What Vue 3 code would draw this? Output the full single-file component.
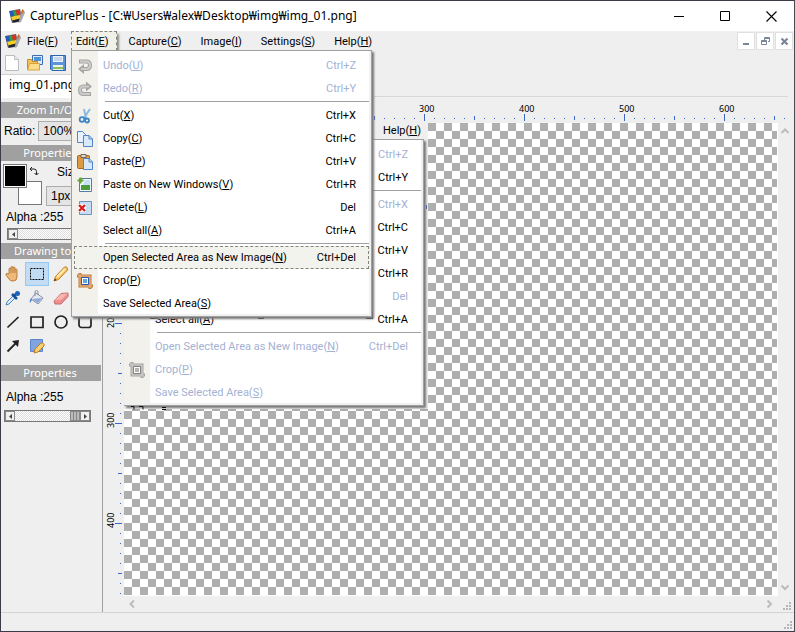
<script setup>
const menubar = [
  { text: 'File', key: 'F' },
  { text: 'Edit', key: 'E', open: true },
  { text: 'Capture', key: 'C' },
  { text: 'Image', key: 'I' },
  { text: 'Settings', key: 'S' },
  { text: 'Help', key: 'H' },
]

const entries = [
  { text: 'Undo', key: 'U', short: 'Ctrl+Z', icon: 'undo' },
  { text: 'Redo', key: 'R', short: 'Ctrl+Y', icon: 'redo' },
  null,
  { text: 'Cut', key: 'X', short: 'Ctrl+X', icon: 'cut' },
  { text: 'Copy', key: 'C', short: 'Ctrl+C', icon: 'copy' },
  { text: 'Paste', key: 'P', short: 'Ctrl+V', icon: 'paste' },
  { text: 'Paste on New Windows', key: 'V', short: 'Ctrl+R', icon: 'pasteNew' },
  { text: 'Delete', key: 'L', short: 'Del', icon: 'delete' },
  { text: 'Select all', key: 'A', short: 'Ctrl+A' },
  null,
  { text: 'Open Selected Area as New Image', key: 'N', short: 'Ctrl+Del' },
  { text: 'Crop', key: 'P', icon: 'crop' },
  { text: 'Save Selected Area', key: 'S' },
]

const menus = [
  {
    name: 'inner',
    disabled: ['Undo', 'Cut', 'Delete', 'Open Selected Area as New Image', 'Crop', 'Save Selected Area'],
    active: '',
  },
  { name: 'front', disabled: ['Undo', 'Redo'], active: 'N' },
]

const ticks = (n) =>
  Array.from({ length: n }, (_, i) => ({ at: i * 10, kind: i % 10 === 0 ? 2 : i % 5 === 0 ? 1 : 0 }))
const topTicks = ticks(67)
const leftTicks = ticks(48)

const tools = ['hand', 'select', 'pencil', 'blank', 'picker', 'fill', 'eraser', 'blank', 'line', 'rect', 'circle', 'round', 'arrow', 'edit']
</script>

<template>
  <div class="window">
    <header class="titlebar">
      <svg class="logo" width="16" height="16" viewBox="0 0 16 16">
        <g id="logo">
          <path d="M0 3l11-2 2 9-3 4-7 1z" fill="#55565c" />
          <path d="M.5 3.500L4 3l1.500 5L2 9z" fill="#2458c4" />
          <path d="M4 3l3-.6L8 8l-2.500.5z" fill="#2fa644" />
          <path d="M7 2.400l4-.6.500 5.200L8 8z" fill="#e0301f" />
          <path d="M2 9l3.500-1 6-1-.5 3.500-7.500 2z" fill="#f7cf2a" />
          <path d="M3.500 12.500l7.500-2-1.500 3-5 1z" fill="#23252b" />
          <path d="M12 4l3-1.500 1 2L12 14l-2.500 1z" fill="#a5a8ac" />
          <path d="M12 4l1.500-3 1.500 1.500-2 4z" fill="#c9733a" />
        </g>
      </svg>
      <h1>CapturePlus - [C:₩Users₩alex₩Desktop₩img₩img_01.png]</h1>
      <div class="winbtns">
        <button aria-label="Minimize"><svg width="11" height="11"><path d="M0 5.500h10" stroke="#000" /></svg></button>
        <button aria-label="Maximize"><svg width="11" height="11"><path d="M.5.5h9v9h-9z" fill="none" stroke="#000" /></svg></button>
        <button aria-label="Close"><svg width="11" height="11"><path d="M.5.5l10 10M10.500.5l-10 10" stroke="#000" stroke-width="1.100" /></svg></button>
      </div>
    </header>

    <nav class="menubar">
      <svg class="logo" width="16" height="16" viewBox="0 0 16 16"><use href="#logo" /></svg>
      <button v-for="m in menubar" :key="m.text" :class="['top', { open: m.open }]">{{ m.text }}(<u>{{ m.key }}</u>)</button>
      <div class="mdi">
        <button aria-label="Minimize document"><svg width="9" height="9"><path d="M1 7h6" stroke="#7a8696" stroke-width="2" /></svg></button>
        <button aria-label="Restore document"><svg width="9" height="9" fill="none" stroke="#7a8696"><path d="M3.500 3V.5h5v4H7M3 1.500h5M.5 3.500h5v4h-5zM1 4.500h4" /></svg></button>
        <button aria-label="Close document"><svg width="9" height="9"><path d="M1.500 1.500l6 6M7.500 1.500l-6 6" stroke="#7a8696" stroke-width="2.200" /></svg></button>
      </div>
    </nav>

    <div class="toolbar">
      <button aria-label="New"><svg width="16" height="16"><path d="M1.500.5h9l4 4v11h-13z" fill="#fff" stroke="#b9bcc0" /><path d="M10.500.5v4h4" fill="#eee" stroke="#b9bcc0" /></svg></button>
      <button aria-label="Open">
        <svg width="16" height="16"><path d="M5.500.5h10v9h-10z" fill="#dceaf8" stroke="#3d6fae" /><path d="M7 2h7v4H7z" fill="#4f92d6" /><path d="M.5 4.500h4l1 2h5v8H.5z" fill="#f5c358" stroke="#c98a26" /><path d="M2.500 8.500h10v6.500H.5z" fill="#fbdd8b" stroke="#d9a03c" /></svg>
      </button>
      <button aria-label="Save">
        <svg width="16" height="16"><path d="M.5.5h15v15H2l-1.500-1.500z" fill="#5c93dc" stroke="#2f64ad" /><path d="M3 1h10v6H3z" fill="#eef4fc" /><path d="M4 3h8M4 5h8" stroke="#9db8d8" /><path d="M3 10h10v5H3z" fill="#eef2e6" /><path d="M3 13h10" stroke="#8abf5a" stroke-width="2" /></svg>
      </button>
    </div>

    <div class="tabs"><a class="tab" href="#doc">img_01.png</a></div>

    <div class="body">
      <aside class="side">
        <h2>Zoom In/Out</h2>
        <div class="row ratio">
          <label for="ratio">Ratio:</label>
          <select id="ratio"><option>100%</option></select>
        </div>
        <h2>Properties</h2>
        <div class="colors">
          <div class="swatches">
            <span class="sw back"></span>
            <span class="sw fore"></span>
            <svg class="swap" width="10" height="10" fill="none" stroke="#222"><path d="M1 3h4q2.500 0 2.500 2.500V9M3 1L1 3l2 2M5.500 7l2 2 2-2" /></svg>
          </div>
          <div class="size">
            <label for="size">Size</label>
            <select id="size"><option>1px</option></select>
          </div>
        </div>
        <p class="alpha">Alpha :255</p>
        <div class="slider wide">
          <button aria-label="Less"><svg width="3" height="5"><path d="M3 0v5L0 2.500z" fill="#444" /></svg></button>
          <span class="track"></span>
          <button aria-label="More"><svg width="3" height="5"><path d="M0 0v5l3-2.500z" fill="#444" /></svg></button>
        </div>
        <h2>Drawing tools</h2>
        <div class="tools">
          <button v-for="(t, i) in tools" :key="i" :aria-label="t" :class="{ on: t === 'select' }">
            <svg width="16" height="16" viewBox="0 0 16 16" fill="none">
              <g v-if="t === 'hand'"><path d="M4 8V3q0-1 1-1t1 1V1.500q0-1 1-1t1 1V2q0-1 1-1t1 1v2q0-1 1-1t1 1v7q0 4-4 4H7q-2 0-3-2L1 9q-.5-1.500 1-1.500z" fill="#f0b878" stroke="#b87c40" /><path d="M6 3v4M8 2v5M10 4v3" stroke="#b87c40" /></g>
              <path v-else-if="t === 'select'" d="M1.500 2.500h13v11h-13z" stroke="#000" stroke-dasharray="2 1" />
              <g v-else-if="t === 'pencil'"><path d="M1 15l1.500-4.500L11.500 1q1.500-.5 2.500.5t.5 2.500L5.500 13.500z" fill="#f8c65c" stroke="#bb7a28" /><path d="M4 11l8-8" stroke="#fdebb0" stroke-width="2" /><path d="M1 15l1-2.500L3.500 14z" fill="#333" /></g>
              <g v-else-if="t === 'picker'"><path d="M1 15l1-3 6-6 2 2-6 6z" fill="#d8ecfb" stroke="#4a86bb" /><path d="M7 4l5 5M9 6l3.500-3.500" stroke="#174f96" stroke-width="2.500" /><circle cx="12.500" cy="3.500" r="2.500" fill="#1c68b8" /></g>
              <g v-else-if="t === 'fill'"><path d="M7 3l7 5-5 6-7-5z" fill="#e5e8ee" stroke="#8791a4" /><path d="M3 9l10-1-4 5z" fill="#8fa9dc" /><path d="M6 6V2q0-1.500 1.500-1.500T9 2v3" stroke="#8791a4" /><path d="M2 8q-2 3-1 5l2-3z" fill="#4f7fd0" /></g>
              <g v-else-if="t === 'eraser'"><path d="M1 11l7-7.500 7-.5v3.500l-7 7.500H2z" fill="#ec8f8f" stroke="#c86a6a" /><path d="M8 4l6.500-.5-6 6-7 1z" fill="#f7b5b2" /></g>
              <path v-else-if="t === 'line'" d="M2.500 13.500l11-10.500" stroke="#222" stroke-width="1.700" />
              <path v-else-if="t === 'rect'" d="M2 3h12v10.500H2z" stroke="#222" stroke-width="1.700" />
              <circle v-else-if="t === 'circle'" cx="8" cy="8" r="6" stroke="#222" stroke-width="1.700" />
              <rect v-else-if="t === 'round'" x="2" y="2.500" width="12" height="11" rx="2.500" stroke="#222" stroke-width="1.700" />
              <g v-else-if="t === 'arrow'"><path d="M2.500 13.500l8-8" stroke="#222" stroke-width="1.800" /><path d="M7 3l7-1-1 7z" fill="#222" /></g>
              <g v-else-if="t === 'edit'"><path d="M1.500 1.500h12v12h-12z" fill="#7fa4e0" stroke="#5b85cc" /><path d="M5 15l1-4 6-6q1.500-.5 2.500.5t.5 2.500l-6 6z" fill="#f8cf6c" stroke="#bb7a28" /></g>
            </svg>
          </button>
        </div>
        <h2>Properties</h2>
        <p class="alpha low">Alpha :255</p>
        <div class="slider">
          <button aria-label="Less"><svg width="3" height="5"><path d="M3 0v5L0 2.500z" fill="#444" /></svg></button>
          <span class="track"><i class="thumb"></i></span>
          <button aria-label="More"><svg width="3" height="5"><path d="M0 0v5l3-2.500z" fill="#444" /></svg></button>
        </div>
      </aside>

      <main class="work">
        <svg class="ruler across">
          <template v-for="t in topTicks" :key="t.at">
            <rect v-if="t.kind === 2" :x="t.at" y="17" width="1" height="7" />
            <rect v-else-if="t.kind === 1" :x="t.at" y="19" width="1" height="4" />
            <rect v-else :x="t.at" y="21" width="1" height="1" />
            <text v-if="t.kind === 2 && t.at" :x="t.at - 5" y="15">{{ t.at }}</text>
          </template>
        </svg>
        <svg class="ruler down">
          <template v-for="t in leftTicks" :key="t.at">
            <rect v-if="t.kind === 2" x="12" :y="t.at" width="7" height="1" />
            <rect v-else-if="t.kind === 1" x="15" :y="t.at" width="4" height="1" />
            <rect v-else x="17" :y="t.at" width="1" height="1" />
            <text v-if="t.kind === 2 && t.at" :transform="`translate(11 ${t.at + 5}) rotate(-90)`">{{ t.at }}</text>
          </template>
        </svg>
        <div class="canvas">
          <div class="pasted">
            <span class="help">Help(<u>H</u>)</span>
            <svg class="edge" width="4" height="30"><path d="M0 6.500h3" stroke="#d0d0d0" /><path d="M2.500 26v5" stroke="#3b63c9" /></svg>
          </div>
        </div>
        <div class="vbar">
          <button aria-label="Scroll up"><svg width="8" height="7"><path d="M.5 5L4 1.500 7.500 5" /></svg></button>
          <button aria-label="Scroll down"><svg width="8" height="7"><path d="M.5 1.500L4 5l3.500-3.500" /></svg></button>
        </div>
        <div class="hbar">
          <button aria-label="Scroll left"><svg width="7" height="8"><path d="M5 .5L1.500 4 5 7.500" /></svg></button>
          <button aria-label="Scroll right"><svg width="7" height="8"><path d="M1.500.5L5 4 1.500 7.500" /></svg></button>
        </div>
        <svg class="grip" width="8" height="8"><path d="M6 0h2v2H6zM3 3h2v2H3zM6 3h2v2H6zM0 6h2v2H0zM3 6h2v2H3zM6 6h2v2H6z" fill="#b5b5b5" /></svg>
      </main>
    </div>

    <footer class="status">
      <svg class="grip" width="8" height="8"><path d="M6 0h2v2H6zM3 3h2v2H3zM6 3h2v2H6zM0 6h2v2H0zM3 6h2v2H3zM6 6h2v2H6z" fill="#b5b5b5" /></svg>
    </footer>

    <template v-for="menu in menus" :key="menu.name">
      <div :class="['menu', menu.name]" role="menu">
        <template v-for="(e, i) in entries" :key="i">
          <div v-if="!e" class="sep"></div>
          <button v-else role="menuitem" :class="['item', { off: menu.disabled.includes(e.text), active: menu.active === e.key }]">
            <span class="ico">
              <svg v-if="e.icon" width="16" height="16" viewBox="0 0 16 16" fill="none">
                <g v-if="e.icon === 'undo'"><path d="M2 3.500h7.500q3.500 0 3.500 3.700T9.500 11H6" stroke="#868686" stroke-width="4" /><path d="M7 6v10L1 11z" fill="#868686" /><path d="M3 3.500h6.500q3.500 0 3.500 3.700T9.500 11H4" stroke="#bdbdbd" stroke-width="2" /></g>
                <g v-else-if="e.icon === 'redo'"><path d="M14 13H6.500Q3 13 3 9.200t3.500-3.700H10" stroke="#868686" stroke-width="4" /><path d="M9 .5v10l6-5z" fill="#868686" /><path d="M13 13H6.500Q3 13 3 9.200t3.500-3.700H12" stroke="#bdbdbd" stroke-width="2" /></g>
                <g v-else-if="e.icon === 'cut'"><path d="M7 1l2 9M13 1L7 10" stroke="#8eb9dc" stroke-width="2" /><circle cx="5" cy="11.500" r="2.300" stroke="#3f85c4" stroke-width="1.800" /><circle cx="10" cy="12.500" r="2" stroke="#3f85c4" stroke-width="1.800" /></g>
                <g v-else-if="e.icon === 'copy'"><path d="M.5.5h5l3 3v8h-8z" fill="#e8f2fd" stroke="#5585c9" /><path d="M6.500 4.500h5.500l3.500 3.500v7.500h-9z" fill="#d8e9fb" stroke="#5585c9" /><path d="M12 4.500v3.500h3.500" stroke="#5585c9" /></g>
                <g v-else-if="e.icon === 'paste'"><rect x=".5" y="1.500" width="12" height="13" rx="1" fill="#dc9a45" stroke="#a9681f" /><path d="M4 .5h5v3H4z" fill="#ddd" stroke="#776655" /><path d="M6.500 4.500h5.500l3.500 3.500v7.500h-9z" fill="#d8e9fb" stroke="#5585c9" /><path d="M12 4.500v3.500h3.500" stroke="#5585c9" /></g>
                <g v-else-if="e.icon === 'pasteNew'"><path d="M2.500 1.500h12v13h-12z" fill="#eef6ff" stroke="#587c9d" /><path d="M4 8h9v5H4z" fill="#4d9b3a" /><path d="M8 3h5v5H6z" fill="#c4e2f6" /><path d="M3.500.5v6M.5 3.500h6" stroke="#65a52a" stroke-width="2" /></g>
                <g v-else-if="e.icon === 'delete'"><path d="M2.500 1.500h12v13h-12z" fill="#c6ddf6" stroke="#6f93bd" /><path d="M1 4h8v8H1z" fill="#fff" /><path d="M2 5l6 6M8 5l-6 6" stroke="#d8201c" stroke-width="2.400" /></g>
                <g v-else><path d="M0 3h13v13M3 0v13h13" stroke="#c07a3c" stroke-width="3" /><path d="M1 3h12v12M3 1v12h12" stroke="#f0c08e" /><path d="M4.500 4.500h7v7h-7z" fill="#fff" stroke="#3159b0" /><path d="M6 6h4v4H6z" fill="#5fa5e0" /></g>
              </svg>
            </span>
            <span class="lbl">{{ e.text }}(<u>{{ e.key }}</u>)</span>
            <span v-if="e.short" class="short">{{ e.short }}</span>
          </button>
        </template>
      </div>
      <svg v-if="menu.name === 'inner'" class="marks" width="300" height="98" fill="none" stroke="#111">
        <path d="M24.500.5v6h5v-6M132.500.5v6h5v-6M240.500.5v6h6v-6" />
        <path d="M5 94.500h3v3M13 94.500h4v3M36 95.500h4M36 97.500h4" />
      </svg>
    </template>
  </div>
</template>

<style>
body { margin: 0; }
</style>

<style scoped>
* { box-sizing: border-box; }
.window {
  position: relative;
  display: flex;
  flex-direction: column;
  height: 100vh;
  border: 1px solid #3b3b47;
  border-right-color: #4a4a52;
  background: #efefef;
  color: #000;
  font: 11px/16px Roboto, "Noto Sans", "Noto Sans CJK KR", sans-serif;
  overflow: hidden;
}
button, select { font: inherit; color: inherit; border: 0; padding: 0; margin: 0; background: none; appearance: none; }
svg { display: block; flex: none; }
u { text-underline-offset: 1px; text-decoration-thickness: 1px; }
h1, h2, p { margin: 0; font-weight: 400; }

.titlebar { display: flex; align-items: center; height: 30px; flex: none; padding-left: 8px; gap: 5px; background: #fff; }
h1 { flex: 1; font: 12px/16px "Noto Sans", "Noto Sans CJK KR", sans-serif; white-space: nowrap; }
.winbtns { display: flex; }
.winbtns button { display: grid; place-items: center; width: 46px; height: 30px; }

.menubar { display: flex; align-items: center; height: 20px; flex: none; padding-left: 4px; }
.top { height: 20px; padding: 1px 9px 0 6px; margin-right: 4px; white-space: nowrap; }
.top.open { background: #f1f1e9; border: 1px dashed #85857a; border-bottom: 0; padding: 0 8px 0 4px; margin-right: 5px; box-shadow: 2px 3px 2px #8c8c8c; }
.mdi { display: flex; gap: 1px; margin-left: auto; padding-right: 1px; }
.mdi button { display: grid; place-items: center; width: 18px; height: 18px; background: #fff; border: 1px solid #e0e0e0; }

.toolbar { display: flex; align-items: center; gap: 7px; height: 23px; flex: none; padding-left: 3px; }
.tabs { display: flex; height: 23px; flex: none; border-bottom: 1px solid #d8d8d8; margin-right: 6px; }
.tab { height: 24px; padding: 2px 12px 0 8px; background: #fff; border-top: 1px solid #d0d0d0; color: #000; text-decoration: none; font: 12px/16px "Noto Sans", sans-serif; }

.body { display: flex; flex: 1; min-height: 0; }
.side { width: 102px; flex: none; padding: 5px 1px 0 0; border-right: 1px solid #a0a0a0; font: 12px/16px "Liberation Sans", sans-serif; }
h2 { height: 16px; padding-right: 2px; background: #a0a0a0; color: #fff; text-align: center; font: 11px/16px "Noto Sans", sans-serif; }
.row { display: flex; align-items: center; height: 27px; gap: 3px; padding: 0 0 2px 3px; }
.side select { height: 20px; border: 1px solid #adadad; background: #e4e4e4; padding-left: 4px; }
.ratio select { width: 58px; }
.colors { display: flex; height: 47px; padding: 3px 0 0 2px; }
.swatches { position: relative; width: 43px; }
.sw { position: absolute; width: 24px; height: 24px; border: 1px solid #777; }
.fore { left: 0; top: 0; background: #000; box-shadow: inset 0 0 0 1px #fff; }
.back { left: 15px; top: 17px; background: #fff; }
.swap { position: absolute; left: 26px; top: 2px; }
.size { display: flex; flex-direction: column; gap: 6px; }
.size label { padding-left: 11px; }
.size select { width: 50px; }
.alpha { padding: 1px 0 0 5px; height: 20px; }
.alpha.low { height: 29px; padding-top: 8px; }
.slider { display: flex; width: 87px; height: 12px; margin: 0 0 0 3px; border: 1px solid #777; background: #f4f4f4; }
.slider.wide { width: 92px; margin: 0 0 3px 6px; }
.slider button { display: grid; place-items: center; width: 10px; border: 1px solid #888; background: #f0f0f0; }
.track { display: flex; justify-content: flex-end; flex: 1; background: repeating-conic-gradient(#ddd 0 25%, #fff 0 50%) 0 0 / 2px 2px; }
.thumb { width: 10px; background: repeating-linear-gradient(90deg, #bbb 0 2px, #888 2px 3px); border: 1px solid #888; }
.tools { display: grid; grid-template-columns: repeat(4, 24px); grid-auto-rows: 24px; padding: 3px 0 7px; }
.tools button { display: grid; place-items: center; }
.tools .on { background: #c1dcf3; border: 1px solid #90c8f6; }

.work { display: grid; flex: 1; min-width: 0; grid-template: 26px 1fr 16px / 21px 1fr 16px; }
.ruler { width: 100%; height: 100%; overflow: hidden; fill: #3b63c9; font-family: "Noto Sans", sans-serif; font-size: 9px; }
.ruler text { fill: #000; }
.across { grid-area: 1 / 2 / 2 / 4; }
.down { grid-area: 2 / 1; overflow: visible; }
.canvas { grid-area: 2 / 2; overflow: hidden; border-right: 1px solid #fff; border-bottom: 1px solid #fff; background: repeating-conic-gradient(#fff 0 25%, #afafaf 0 50%) 0 0 / 16px 16px; }
.pasted { display: flex; flex-direction: column; align-items: flex-end; width: 304px; height: 286px; background: #efefef; }
.help { height: 56px; padding-right: 7px; line-height: 15px; }
.vbar { grid-area: 2 / 3; display: flex; flex-direction: column; justify-content: space-between; align-items: center; padding: 5px 2px 5px 0; }
.hbar { grid-area: 3 / 2; display: flex; justify-content: space-between; align-items: center; padding: 0 5px; }
.vbar svg, .hbar svg { fill: none; stroke: #bcbcbc; stroke-width: 2; }
.work .grip { grid-area: 3 / 3; margin: 6px 0 0 5px; }
.status { display: flex; justify-content: flex-end; align-items: flex-end; height: 19px; flex: none; border-top: 1px solid #d4d4d4; padding: 0 2px 2px 0; }

.menu {
  position: absolute;
  width: 301px;
  padding: 3px 2px 1px 0;
  border: 1px solid #a0a0a0;
  background: linear-gradient(90deg, #f2f1eb 26px, #fff 26px);
  background-clip: padding-box;
  box-shadow: inset -2px -2px #f0f0f0, 2px 2px 2px #777;
}
.front { left: 70px; top: 49px; }
.inner { left: 123px; top: 138px; width: 300px; border-left: 0; }
.item { display: flex; align-items: center; width: 100%; height: 23px; padding-right: 13px; text-align: left; white-space: nowrap; }
.item.off { color: #a3b1d3; }
.item.active { background: #f3f3ee; outline: 1px dashed #85857a; outline-offset: -1px; margin-left: 2px; width: calc(100% - 2px); }
.item.active .ico { width: 29px; }
.ico { width: 31px; flex: none; padding-left: 5px; }
.off .ico { filter: grayscale(1); opacity: .7; }
.lbl { flex: 1; }
.sep { height: 4px; padding-top: 1px; margin-left: 33px; }
.sep::before { content: ""; display: block; height: 1px; background: #a0a0a0; }
.marks { position: absolute; left: 125px; top: 311px; }
</style>
